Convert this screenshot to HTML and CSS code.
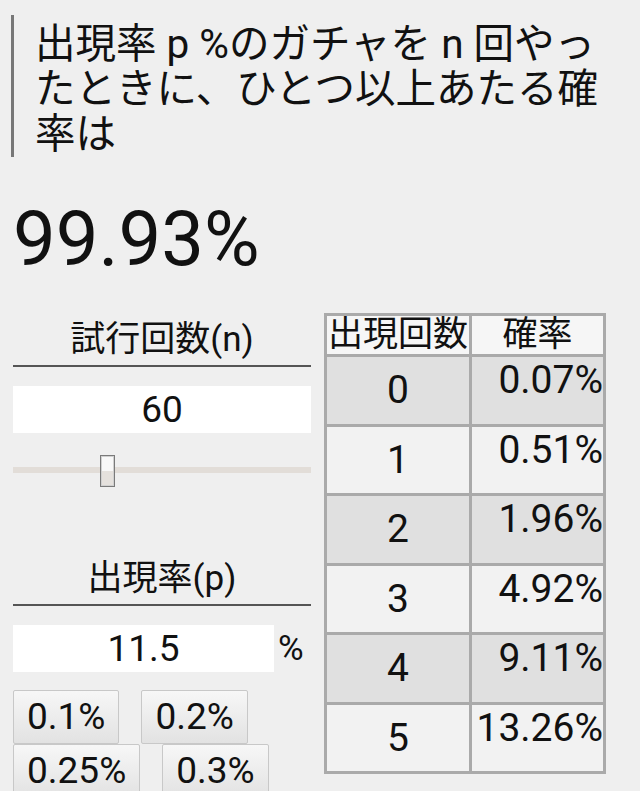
FILE: index.html
```html
<!DOCTYPE html>
<html lang="ja">
<head>
<meta charset="utf-8">
<title>ガチャ確率</title>
<link rel="stylesheet" href="styles.css">
</head>
<body>
<h1 class="title">出現率 p %のガチャを n 回やったときに、ひとつ以上あたる確率は</h1>
<div class="result">99.93%</div>
<div class="main">
  <div class="left">
    <div class="label">試行回数(n)</div>
    <div class="field">60</div>
    <div class="slider">
      <div class="track"></div>
      <div class="thumb"></div>
    </div>
    <div class="label label-p">出現率(p)</div>
    <div class="prow">
      <div class="field field-p">11.5</div>
      <span class="unit">%</span>
    </div>
    <div class="buttons">
      <button class="btn">0.1%</button>
      <button class="btn">0.2%</button>
      <button class="btn">0.25%</button>
      <button class="btn">0.3%</button>
    </div>
  </div>
  <table class="dist">
    <tr class="head"><th>出現回数</th><th>確率</th></tr>
    <tr class="odd"><td class="k">0</td><td class="v">0.07%</td></tr>
    <tr class="even"><td class="k">1</td><td class="v">0.51%</td></tr>
    <tr class="odd"><td class="k">2</td><td class="v">1.96%</td></tr>
    <tr class="even"><td class="k">3</td><td class="v">4.92%</td></tr>
    <tr class="odd"><td class="k">4</td><td class="v">9.11%</td></tr>
    <tr class="even"><td class="k">5</td><td class="v">13.26%</td></tr>
  </table>
</div>
</body>
</html>
```
FILE: styles.css
```css
html, body {
  margin: 0;
  padding: 0;
  background: #efefef;
  color: #111;
  font-family: Roboto, "Noto Sans CJK JP", sans-serif;
}

.title {
  margin: 15px 20px 0 11px;
  padding: 7px 0 0 21px;
  border-left: 3px solid #777;
  font-size: 40.5px;
  font-weight: normal;
  line-height: 45px;
}

.result {
  margin: 38px 0 0 13px;
  font-size: 76px;
  line-height: 1.172;
}

.main {
  display: flex;
  align-items: flex-start;
  gap: 13px;
  margin: 29px 0 0 13px;
}

.left {
  width: 298px;
}

.label {
  text-align: center;
  font-size: 35px;
  line-height: 41px;
  padding-top: 6px;
  padding-bottom: 5px;
  border-bottom: 2px solid #555;
}

.field {
  background: #fff;
  height: 47px;
  line-height: 47px;
  text-align: center;
  font-size: 37px;
  margin-top: 19px;
}

.slider {
  position: relative;
  height: 20px;
  padding-top: 34px;
}

.track {
  height: 6px;
  background: #e2ddd8;
}

.thumb {
  position: absolute;
  left: 87px;
  top: 22px;
  width: 13px;
  height: 30px;
  border: 1px solid #7a7a7a;
  box-shadow: inset 0 0 0 1px #d0d0d0;
  background: linear-gradient(#f8f8f8 50%, #e5e1dd 50%);
}

.label-p {
  margin-top: 65px;
}

.prow {
  display: flex;
  align-items: center;
}

.field-p {
  width: 261px;
}

.unit {
  font-size: 35px;
  margin: 19px 0 0 4px;
}

.buttons {
  display: flex;
  flex-wrap: wrap;
  column-gap: 22px;
  margin-top: 18px;
}

.btn {
  font-family: Roboto, "Noto Sans CJK JP", sans-serif;
  font-size: 37px;
  color: #111;
  height: 54px;
  padding: 0 13px;
  border: 1px solid #c8c8c8;
  border-radius: 2px;
  background: linear-gradient(#f7f7f7, #e2e2e2);
  line-height: 52px;
}

.dist {
  border-collapse: collapse;
  width: 282px;
}

.dist th, .dist td {
  border: 3px solid #aaa;
  padding: 0;
  font-weight: normal;
}

.dist th {
  font-size: 35px;
  height: 38px;
  line-height: 38px;
  background: #f6f6f6;
}

.dist th:first-child {
  width: 142px;
}

.dist td {
  height: 66.5px;
  font-size: 39px;
  line-height: 46px;
}

.odd td {
  background: #e0e0e0;
}

.even td {
  background: #f2f2f2;
}

.k {
  text-align: center;
  vertical-align: middle;
}

.v {
  text-align: right;
  vertical-align: top;
  padding-right: 4px;
  padding-top: 5px;
}
```
